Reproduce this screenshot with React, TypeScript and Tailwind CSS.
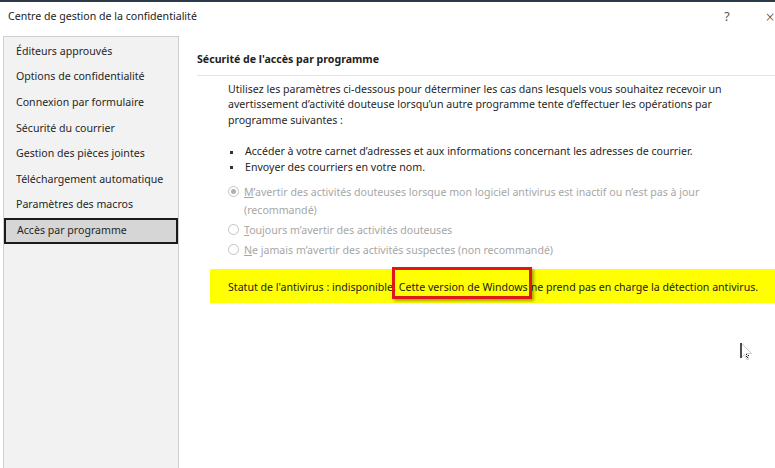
import type { ReactNode } from "react";

const navItems = [
  "Éditeurs approuvés",
  "Options de confidentialité",
  "Connexion par formulaire",
  "Sécurité du courrier",
  "Gestion des pièces jointes",
  "Téléchargement automatique",
  "Paramètres des macros",
  "Accès par programme",
];

function Radio({ checked, children }: { checked?: boolean; children: ReactNode }) {
  return (
    <div className="flex items-start gap-[5px]">
      <span className="mt-[3px] flex h-[11px] w-[11px] shrink-0 items-center justify-center rounded-full border border-[#c4c4c4] bg-white">
        {checked && <span className="h-[5px] w-[5px] rounded-full bg-[#b0b0b0]" />}
      </span>
      <div className="leading-[18px] text-[#a6a6a6]">{children}</div>
    </div>
  );
}

function Cursor() {
  return (
    <svg width="14" height="20" viewBox="0 0 14 20" className="absolute left-[740px] top-[340px]">
      <path d="M1 1 L1 16 L4.5 12.5 L7 18 L9 17 L6.5 11.5 L11.5 11.5 Z" fill="white" stroke="#bdbdbd" strokeWidth="0.8" />
      <path d="M1 1 L1 16" stroke="#111" strokeWidth="1.4" />
      <rect x="6" y="12" width="1" height="1" fill="#222" />
      <rect x="8" y="13" width="1" height="1" fill="#222" />
      <rect x="6" y="14" width="1" height="1" fill="#222" />
      <rect x="7" y="15" width="1" height="1" fill="#222" />
    </svg>
  );
}

export default function App() {
  return (
    <div
      className="relative h-[468px] w-[775px] overflow-hidden border-t-2 border-[#2b3a4a] bg-white text-[10.6px] text-[#262626]"
      style={{ fontFamily: '"Noto Sans", "Open Sans", sans-serif' }}
    >
      {/* Title bar */}
      <div className="flex h-[30px] items-center pl-[8px]">
        <span className="flex-1 text-[#222]">Centre de gestion de la confidentialité</span>
        <span className="w-[14px] text-center text-[12.5px] text-[#555]">?</span>
        <span className="ml-[29px] mr-[-2px] w-[14px] text-center text-[16px] font-light text-[#555]">×</span>
      </div>

      <div className="flex">
        {/* Sidebar */}
        <div className="ml-[3px] mt-[4px] h-[440px] w-[176px] shrink-0 border border-[#cfcfcf] bg-[#f2f2f2] pt-[2px]">
          {navItems.map((item, i) => (
            <div
              key={item}
              className={
                i === navItems.length - 1
                  ? "flex h-[26px] items-center border-2 border-[#1a1a1a] bg-[#d6d6d6] pl-[11px]"
                  : "flex h-[25.6px] items-center pl-[12px]"
              }
            >
              {item}
            </div>
          ))}
        </div>

        {/* Content */}
        <div className="relative flex-1 pl-[18px] pt-[20px]">
          <div className="font-bold text-[#222]">Sécurité de l'accès par programme</div>
          <div className="mt-[7px] h-px bg-[#e3e3e3]" />

          <div className="ml-[31px] mt-[6px] leading-[15.5px]">
            <p className="whitespace-nowrap">
              Utilisez les paramètres ci-dessous pour déterminer les cas dans lesquels vous souhaitez recevoir un
            </p>
            <p className="whitespace-nowrap">
              avertissement d’activité douteuse lorsqu’un autre programme tente d’effectuer les opérations par
            </p>
            <p className="whitespace-nowrap">programme suivantes :</p>

            <ul className="mt-[16px]">
              <li className="flex items-center whitespace-nowrap">
                <span className="ml-[2px] mr-[12px] h-[3px] w-[3px] bg-[#333]" />Accéder à votre carnet d’adresses et aux informations concernant les adresses de courrier.
              </li>
              <li className="flex items-center whitespace-nowrap">
                <span className="ml-[2px] mr-[12px] h-[3px] w-[3px] bg-[#333]" />Envoyer des courriers en votre nom.
              </li>
            </ul>

            <div className="mt-[8px] flex flex-col gap-[2px]">
              <Radio checked>
                <span className="underline">M</span>’avertir des activités douteuses lorsque mon logiciel antivirus est inactif ou n’est pas à jour
                <br />
                (recommandé)
              </Radio>
              <Radio>
                <span className="underline">T</span>oujours m’avertir des activités douteuses
              </Radio>
              <Radio>
                <span className="underline">N</span>e jamais m’avertir des activités suspectes (non recommandé)
              </Radio>
            </div>
          </div>

          {/* Antivirus status */}
          <div className="ml-[13px] mt-[10px] flex h-[34px] items-center whitespace-nowrap bg-[#ffff00] pl-[18px] pt-[4px] text-[#1a1a1a]">
            Statut de l'antivirus : indisponible.
            <span className="relative ml-[3px]">
              Cette version de Windows
              <span className="absolute bottom-[-3px] left-[-7px] right-[-4px] top-[-13px] border-[3px] border-[#e0161b] shadow-[2px_2px_3px_rgba(0,0,0,0.35)]" />
            </span>
            <span className="ml-[3px]">ne prend pas en charge la détection antivirus.</span>
          </div>
        </div>
      </div>

      <Cursor />
    </div>
  );
}
